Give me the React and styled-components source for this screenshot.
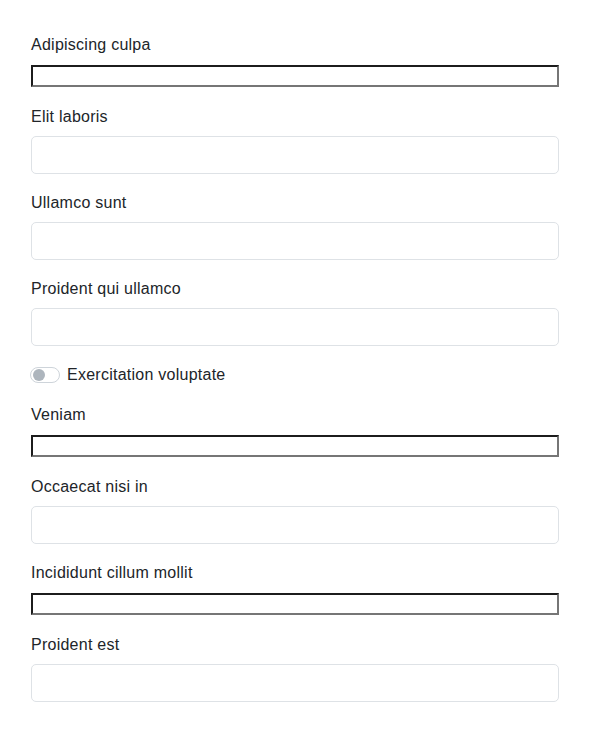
import React from "react";
import styled, { createGlobalStyle } from "styled-components";

const GlobalStyle = createGlobalStyle`
  body {
    margin: 0;
    background: #fff;
    color: #212529;
    font-family: "Liberation Sans", Arial, sans-serif;
    font-size: 16px;
    line-height: 24px;
    letter-spacing: 0.25px;
  }
`;

const Form = styled.form`
  padding: 32px 31px;
`;

const Group = styled.div`
  margin-bottom: 16px;
`;

const Label = styled.label`
  display: block;
  box-sizing: border-box;
  height: 24px;
  padding-top: 1px;
  margin-bottom: 8px;
  line-height: 24px;
`;

const Control = styled.input`
  display: block;
  box-sizing: border-box;
  width: 100%;
  height: 38px;
  border: 1px solid #dee2e6;
  border-radius: 5px;
  background: #fff;
  padding: 6px 12px;
  font: inherit;
`;

const PlainSlot = styled.div`
  height: 24px;
  padding-top: 1px;
  box-sizing: border-box;
`;

const PlainInput = styled.input`
  display: block;
  box-sizing: border-box;
  width: 100%;
  height: 22px;
  margin: 0;
  padding: 1px 2px;
  background: #fff;
  border-style: solid;
  border-width: 2px;
  border-color: #1c1c1c #767676 #767676 #1c1c1c;
  font-size: 13px;
`;

const SwitchRow = styled.div`
  display: flex;
  align-items: center;
  gap: 7px;
  height: 24px;
  padding-top: 1px;
  box-sizing: border-box;
  margin-bottom: 16px;
  margin-left: -1px;
`;

const Track = styled.span`
  position: relative;
  box-sizing: border-box;
  width: 30px;
  height: 16px;
  border: 1px solid #ced4da;
  border-radius: 8px;
  background: #fff;
`;

const Knob = styled.span`
  position: absolute;
  top: 1px;
  left: 2px;
  width: 12px;
  height: 12px;
  border-radius: 50%;
  background: #adb5bd;
`;

const fields = [
  { label: "Adipiscing culpa", kind: "plain" },
  { label: "Elit laboris", kind: "control" },
  { label: "Ullamco sunt", kind: "control" },
  { label: "Proident qui ullamco", kind: "control" },
  { label: "Exercitation voluptate", kind: "switch" },
  { label: "Veniam", kind: "plain" },
  { label: "Occaecat nisi in", kind: "control" },
  { label: "Incididunt cillum mollit", kind: "plain" },
  { label: "Proident est", kind: "control" },
];

const App = () => (
  <>
    <GlobalStyle />
    <Form>
      {fields.map((f) =>
        f.kind === "switch" ? (
          <SwitchRow key={f.label}>
            <Track>
              <Knob />
            </Track>
            <span>{f.label}</span>
          </SwitchRow>
        ) : (
          <Group key={f.label}>
            <Label>{f.label}</Label>
            {f.kind === "plain" ? (
              <PlainSlot>
                <PlainInput type="text" />
              </PlainSlot>
            ) : (
              <Control type="text" />
            )}
          </Group>
        )
      )}
    </Form>
  </>
);

export default App;
